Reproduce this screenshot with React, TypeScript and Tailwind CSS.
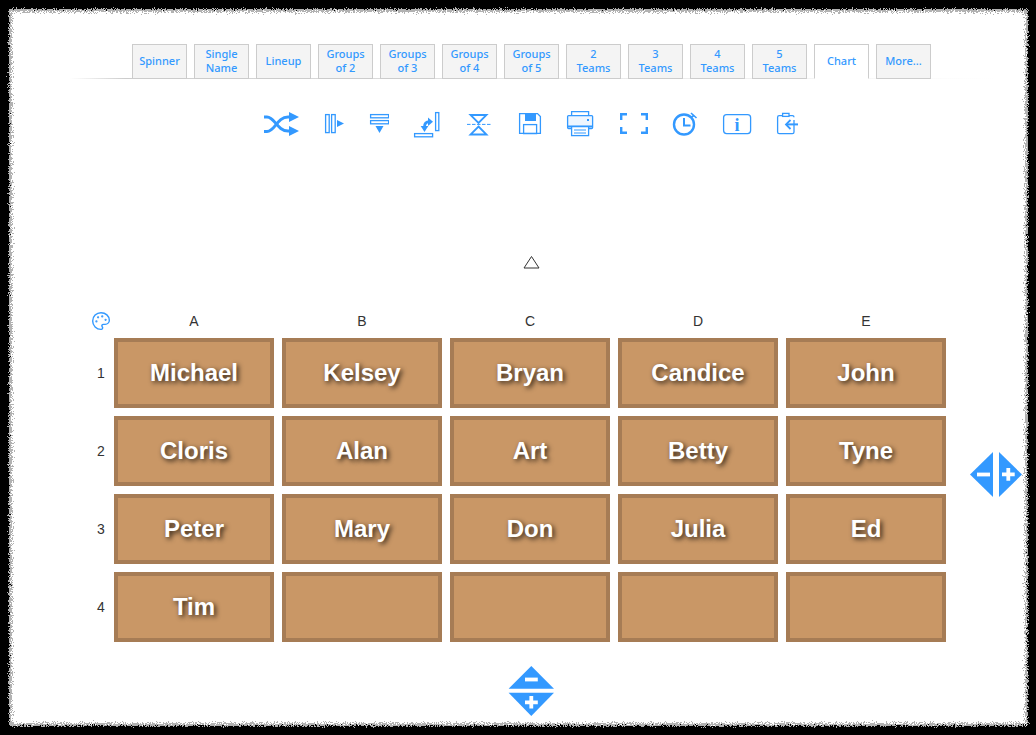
import { Palette } from 'lucide-react';

const tabs: { label: string[]; active?: boolean }[] = [
  { label: ['Spinner'] },
  { label: ['Single', 'Name'] },
  { label: ['Lineup'] },
  { label: ['Groups', 'of 2'] },
  { label: ['Groups', 'of 3'] },
  { label: ['Groups', 'of 4'] },
  { label: ['Groups', 'of 5'] },
  { label: ['2', 'Teams'] },
  { label: ['3', 'Teams'] },
  { label: ['4', 'Teams'] },
  { label: ['5', 'Teams'] },
  { label: ['Chart'], active: true },
  { label: ['More...'] },
];

const columns = ['A', 'B', 'C', 'D', 'E'];

const rows = [
  ['Michael', 'Kelsey', 'Bryan', 'Candice', 'John'],
  ['Cloris', 'Alan', 'Art', 'Betty', 'Tyne'],
  ['Peter', 'Mary', 'Don', 'Julia', 'Ed'],
  ['Tim', '', '', '', ''],
];

const BLUE = '#3399ff';

// toolbar icons use page coordinates in their viewBox, easier to compare with the screenshot
function Shuffle() {
  return (
    <svg viewBox="264 112 36 24" className="h-[24px] w-[36px]" fill="none" stroke={BLUE} strokeWidth="3">
      <path d="M264 117H267C275 117 277 131 288 131H291" />
      <path d="M264 131.5H267C275 131.5 277 117 288 117H291" />
      <path d="M289 112L299 117L289 122Z" fill={BLUE} stroke="none" />
      <path d="M289 126L299 131L289 136Z" fill={BLUE} stroke="none" />
    </svg>
  );
}

function ColumnMove() {
  return (
    <svg viewBox="324 112 20 24" className="h-[24px] w-[20px]" fill="none" stroke={BLUE} strokeWidth="1.3">
      <rect x="325.6" y="114.6" width="3.6" height="18" />
      <rect x="331.6" y="114.6" width="3.6" height="18" />
      <path d="M337 120L344 123.5L337 127Z" fill={BLUE} stroke="none" />
    </svg>
  );
}

function RowMove() {
  return (
    <svg viewBox="368 112 21 24" className="h-[24px] w-[21px]" fill="none" stroke={BLUE} strokeWidth="1.3">
      <rect x="370.6" y="114.6" width="18" height="3.2" />
      <rect x="370.6" y="120.6" width="18" height="3.2" />
      <path d="M375.5 126H383.5L379.5 133Z" fill={BLUE} stroke="none" />
    </svg>
  );
}

function Transpose() {
  return (
    <svg viewBox="413 111 29 26" className="h-[26px] w-[29px]" fill="none" stroke={BLUE} strokeWidth="1.3" overflow="visible">
      <rect x="414.6" y="133.6" width="18" height="3.2" />
      <rect x="435.6" y="112.6" width="3.2" height="18" />
      <path d="M424.5 127C424.5 123.5 426.5 121.7 429.5 121.7" strokeWidth="2.8" />
      <path d="M420.7 126H428.3L424.5 132Z" fill={BLUE} stroke="none" />
      <path d="M428 117.5L433 121.7L428 126Z" fill={BLUE} stroke="none" />
    </svg>
  );
}

function Hourglass() {
  return (
    <svg viewBox="466 112 28 24" className="h-[24px] w-[28px]" fill="none" stroke={BLUE}>
      <path d="M470.5 115H486.5L478.5 123Z" strokeWidth="1.8" />
      <path d="M478.5 126.5L486.5 134.5H470.5Z" strokeWidth="1.8" />
      <path d="M467 124.4H491" strokeWidth="1" strokeDasharray="3.5 1.5" />
    </svg>
  );
}

function Save() {
  return (
    <svg viewBox="518 112 24 24" className="h-[24px] w-[24px]" fill="none" stroke={BLUE} strokeWidth="1.3">
      <path d="M519.6 113.6H537.5L540.4 116.5V133.4H519.6Z" />
      <rect x="525" y="113" width="11" height="8" fill={BLUE} stroke="none" />
      <rect x="523.6" y="124.6" width="13" height="9" />
    </svg>
  );
}

function Printer() {
  return (
    <svg viewBox="566 110 29 28" className="h-[28px] w-[29px]" fill="none" stroke={BLUE} strokeWidth="1.3">
      <path d="M571.6 115V111.6H588.6V115" />
      <rect x="567.6" y="115.6" width="25" height="13" rx="1" fill="#eef6ff" />
      <path d="M568 126.5H592.5" strokeWidth="2" />
      <rect x="571.6" y="126.6" width="17" height="9" fill="#fff" />
      <path d="M574 130H586M574 133H586" strokeWidth="1" />
      <rect x="587" y="119" width="2" height="2" fill={BLUE} stroke="none" />
    </svg>
  );
}

function Fullscreen() {
  return (
    <svg viewBox="619 112 29 24" className="h-[24px] w-[29px]" fill="none" stroke={BLUE} strokeWidth="2.4">
      <path d="M627 114.2H621.2V120M641 114.2H646.8V120M621.2 127V132.8H627M646.8 127V132.8H641" />
    </svg>
  );
}

function Timer() {
  return (
    <svg viewBox="672 111 26 26" className="h-[26px] w-[26px]" fill="none" stroke={BLUE}>
      <circle cx="684" cy="124.5" r="10" strokeWidth="2.4" />
      <path d="M684 118V125.5H690.5" strokeWidth="2" />
      <path d="M691 113L696.5 118" strokeWidth="1.6" />
      <path d="M691 117.5L693.8 115.5" strokeWidth="1.6" />
    </svg>
  );
}

function Info() {
  return (
    <svg viewBox="722 113 30 22" className="h-[22px] w-[30px]" fill="none" stroke={BLUE} strokeWidth="1.3">
      <rect x="723.6" y="114.6" width="27" height="19" rx="3" />
      <text x="737" y="131" textAnchor="middle" fill={BLUE} stroke="none" fontSize="18" fontWeight="700" fontFamily="'Liberation Serif', serif">i</text>
    </svg>
  );
}

function ClipboardIn() {
  return (
    <svg viewBox="776 112 23 24" className="h-[24px] w-[23px]" fill="none" stroke={BLUE} strokeWidth="1.3">
      <path d="M794 120V132C794 133 793.4 133.6 792.4 133.6H779.2C778.2 133.6 777.6 133 777.6 132V117.2C777.6 116.2 778.2 115.6 779.2 115.6H792.4C793.4 115.6 794 116.2 794 117.2" />
      <rect x="782.6" y="113.4" width="6.4" height="3" fill="#fff" />
      <path d="M787 124.4H798" strokeWidth="2" />
      <path d="M790.5 120L786 124.4L790.5 129" strokeWidth="1.8" />
    </svg>
  );
}

function ColumnAdjust() {
  return (
    <svg viewBox="970 452 52 45" className="h-[45px] w-[52px]" fill={BLUE}>
      <path d="M970 474.5L993 452V497Z" />
      <path d="M999 452L1022 474.5L999 497Z" />
      <path d="M977 472.6H990V476.4H977Z" fill="#fff" />
      <path d="M1002 472.5H1006.4V468H1010.2V472.5H1014.7V476.3H1010.2V480.8H1006.4V476.3H1002Z" fill="#fff" />
    </svg>
  );
}

function RowAdjust() {
  return (
    <svg viewBox="508 666 47 50" className="h-[50px] w-[47px]" fill={BLUE}>
      <path d="M531.3 666L554 688.8H508.6Z" />
      <path d="M508.6 692.8H554L531.3 716Z" />
      <path d="M525 677.6H537.8V681.4H525Z" fill="#fff" />
      <path d="M525 700.4H529.4V696H533.2V700.4H537.8V704.2H533.2V708.6H529.4V704.2H525Z" fill="#fff" />
    </svg>
  );
}

// torn black edge round the whole page, the second path is the grey grain inside it
function TornFrame() {
  return (
    <svg className="pointer-events-none absolute inset-0 h-full w-full" viewBox="0 0 1036 735">
      <defs>
        <filter id="torn" x="-5%" y="-5%" width="110%" height="110%">
          <feTurbulence type="fractalNoise" baseFrequency="1.1" numOctaves="2" seed="4" />
          <feDisplacementMap in="SourceGraphic" scale="7" />
          <feGaussianBlur stdDeviation="0.5" />
        </filter>
        <filter id="grain" x="-5%" y="-5%" width="110%" height="110%">
          <feTurbulence type="fractalNoise" baseFrequency="0.9" numOctaves="2" seed="11" />
          <feDisplacementMap in="SourceGraphic" scale="10" />
          <feGaussianBlur stdDeviation="0.7" />
        </filter>
      </defs>
      <path
        d="M-30 -30H1066V765H-30ZM12 12V723H1025V12Z"
        fillRule="evenodd"
        fill="#000"
        fillOpacity="0.3"
        filter="url(#grain)"
      />
      <path
        d="M-30 -30H1066V765H-30ZM9 9V726H1028V9Z"
        fillRule="evenodd"
        fill="#000"
        filter="url(#torn)"
      />
    </svg>
  );
}

export default function App() {
  return (
    <div className="relative h-[735px] w-[1036px] overflow-hidden bg-white pt-[44px] font-['Liberation_Sans',sans-serif]">
      <div className="relative">
        <div className="flex gap-[7px] pl-[132px]">
          {tabs.map((tab) => (
            <div
              key={tab.label.join(' ')}
              className={`relative z-10 flex h-[35px] w-[55px] flex-col items-center justify-center border border-[#cccccc] pb-[2px] font-['Noto_Sans',sans-serif] text-[11px] leading-[14px] font-medium text-[#3399ff] ${
                tab.active ? 'border-b-white bg-white' : 'bg-[#f4f4f4]'
              }`}
            >
              {tab.label.map((line) => (
                <span key={line}>{line}</span>
              ))}
            </div>
          ))}
        </div>
        <div className="absolute right-[40px] bottom-0 left-[70px] h-px bg-gradient-to-r from-transparent via-[#cccccc] via-[6%] to-transparent" />
      </div>

      <div className="mt-[28px] flex h-[34px] items-center gap-[24px] pl-[264px]">
        <Shuffle />
        <ColumnMove />
        <RowMove />
        <Transpose />
        <Hourglass />
        <Save />
        <Printer />
        <Fullscreen />
        <Timer />
        <Info />
        <ClipboardIn />
      </div>

      <div className="mt-[114px] flex justify-center pl-[26px]">
        <svg viewBox="523 255 17 14" className="h-[14px] w-[17px]" fill="none" stroke="#333333" strokeWidth="1">
          <path d="M531.5 256.5L539 268H524Z" />
        </svg>
      </div>

      <div className="mt-[43px] flex items-center pl-[88px]">
        <div className="text-[14px] text-[#333333]">
          <div className="flex h-[26px] items-start">
            <div className="flex h-[18px] w-[26px] items-center justify-center">
              <Palette size={20} color={BLUE} strokeWidth={1.7} />
            </div>
            <div className="flex gap-[8px]">
              {columns.map((c) => (
                <div key={c} className="h-[18px] w-[160px] text-center leading-[18px]">
                  {c}
                </div>
              ))}
            </div>
          </div>
          <div className="flex flex-col gap-[8px]">
            {rows.map((row, r) => (
              <div key={r} className="flex items-center">
                <div className="w-[26px] text-center">{r + 1}</div>
                <div className="flex gap-[8px]">
                  {row.map((name, c) => (
                    <div
                      key={c}
                      className="flex h-[70px] w-[160px] items-center justify-center border-[4px] border-[#a67c55] bg-[#c99766] text-[24px] font-bold text-white [text-shadow:2px_2px_5px_rgba(0,0,0,0.8)]"
                    >
                      {name}
                    </div>
                  ))}
                </div>
              </div>
            ))}
          </div>
        </div>
        <div className="mb-[5px] ml-[24px]">
          <ColumnAdjust />
        </div>
      </div>

      <div className="mt-[24px] flex justify-center pl-[26px]">
        <RowAdjust />
      </div>

      <TornFrame />
    </div>
  );
}
